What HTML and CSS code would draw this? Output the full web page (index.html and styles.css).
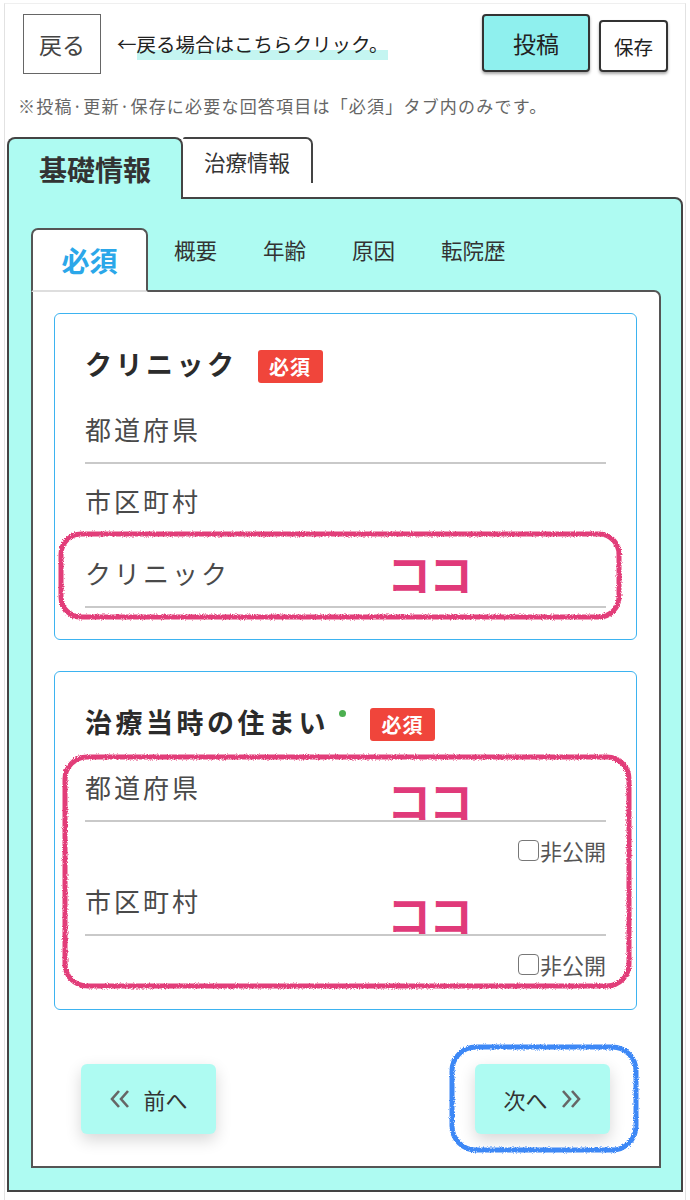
FILE: index.html
```html
<!DOCTYPE html>
<html lang="ja">
<head>
<meta charset="utf-8">
<title>基礎情報</title>
<link rel="stylesheet" href="styles.css">
</head>
<body>
<svg class="defs" width="0" height="0" aria-hidden="true">
  <filter id="rough" x="-5%" y="-5%" width="110%" height="110%">
    <feTurbulence type="fractalNoise" baseFrequency="0.9" numOctaves="2" seed="4" result="noise"/>
    <feDisplacementMap in="SourceGraphic" in2="noise" scale="3.5" xChannelSelector="R" yChannelSelector="G"/>
  </filter>
</svg>
<div class="page">
  <header class="top">
    <div class="btn-back">戻る</div>
    <p class="hint">←<span class="mark">戻る場合はこちらクリック。</span></p>
    <div class="actions">
      <div class="btn-post">投稿</div>
      <div class="btn-save">保存</div>
    </div>
  </header>
  <p class="note">※投稿·更新·保存に必要な回答項目は「必須」タブ内のみです。</p>

  <nav class="main-tabs">
    <div class="main-tab is-active">基礎情報</div>
    <div class="main-tab">治療情報</div>
  </nav>

  <section class="main-panel">
    <nav class="sub-tabs">
      <div class="sub-tab is-active">必須</div>
      <div class="sub-tab first">概要</div>
      <div class="sub-tab">年齢</div>
      <div class="sub-tab">原因</div>
      <div class="sub-tab">転院歴</div>
    </nav>

    <div class="sub-panel">
      <div class="card">
        <div class="card-title">
          <span class="title-text">クリニック</span>
          <span class="badge">必須</span>
        </div>
        <div class="field first"><span class="label">都道府県</span></div>
        <div class="field"><span class="label">市区町村</span></div>
        <div class="field"><span class="label">クリニック</span><span class="koko koko-clinic">ココ</span></div>
        <svg class="scribble scribble-clinic" viewBox="0 0 564 89" preserveAspectRatio="none" aria-hidden="true">
          <rect x="3" y="3" width="558" height="83" rx="20" ry="20" class="pink-stroke"/>
        </svg>
      </div>

      <div class="card">
        <div class="card-title">
          <span class="title-text">治療当時の住まい</span>
          <span class="dot"></span>
          <span class="badge badge-after-dot">必須</span>
        </div>
        <div class="field first"><span class="label">都道府県</span><span class="koko koko-addr">ココ</span></div>
        <div class="private"><span class="checkbox"></span>非公開</div>
        <div class="field"><span class="label">市区町村</span><span class="koko koko-addr">ココ</span></div>
        <div class="private"><span class="checkbox"></span>非公開</div>
        <svg class="scribble scribble-address" viewBox="0 0 570 235" preserveAspectRatio="none" aria-hidden="true">
          <rect x="3" y="3" width="564" height="229" rx="22" ry="22" class="pink-stroke"/>
        </svg>
      </div>

      <div class="pager">
        <div class="pager-btn">
          <svg class="chev" viewBox="0 0 24 20" aria-hidden="true"><polyline points="10,2 3,10 10,18"/><polyline points="19,2 12,10 19,18"/></svg>
          <span>前へ</span>
        </div>
        <div class="pager-btn next">
          <span>次へ</span>
          <svg class="chev" viewBox="0 0 24 20" aria-hidden="true"><polyline points="5,2 12,10 5,18"/><polyline points="14,2 21,10 14,18"/></svg>
          <svg class="scribble scribble-next" viewBox="0 0 190 109" preserveAspectRatio="none" aria-hidden="true">
            <rect x="3" y="3" width="184" height="103" rx="24" ry="24" class="blue-stroke"/>
          </svg>
        </div>
      </div>
    </div>
  </section>
</div>
</body>
</html>
```

FILE: styles.css
```css
* { box-sizing: border-box; }

html, body {
  margin: 0;
  padding: 0;
  background: #fff;
}

body {
  font-family: "Noto Sans CJK JP", "Noto Sans", sans-serif;
  color: #333;
}

.defs {
  position: absolute;
  width: 0;
  height: 0;
  overflow: hidden;
}

.page {
  margin: 3px 4px 0 4px;
  min-height: 1197px;
  border-top: 1px solid #efefef;
  border-left: 1px solid #e2e2e2;
  border-right: 1px solid #e2e2e2;
  padding-top: 10px;
}

/* header */
.top {
  display: flex;
  align-items: flex-start;
  padding: 0 17px 0 18px;
}

.btn-back {
  width: 78px;
  height: 60px;
  border: 1.5px solid #666;
  display: flex;
  align-items: center;
  justify-content: center;
  font-size: 23px;
  color: #444;
  background: #fff;
}

.hint {
  margin: 0 0 0 16px;
  align-self: center;
  font-size: 19.5px;
  line-height: 28px;
  color: #222;
  flex: 1;
}

.mark {
  background: linear-gradient(transparent 68%, #c4f5f1 68%);
  padding-bottom: 2px;
}

.actions {
  display: flex;
  align-items: flex-end;
  gap: 9px;
}

.btn-post {
  width: 108px;
  height: 58px;
  background: #8ff0ee;
  border: 2px solid #333;
  border-radius: 4px;
  box-shadow: 0 2px 3px rgba(0, 0, 0, 0.35);
  display: flex;
  align-items: center;
  justify-content: center;
  font-size: 23px;
  color: #222;
}

.btn-save {
  width: 69px;
  height: 52px;
  background: #fff;
  border: 2px solid #333;
  border-radius: 4px;
  box-shadow: 0 2px 3px rgba(0, 0, 0, 0.35);
  display: flex;
  align-items: center;
  justify-content: center;
  font-size: 19.5px;
  color: #222;
}

.note {
  margin: 20px 0 0 0;
  padding-left: 13px;
  font-size: 17px;
  letter-spacing: 1.2px;
  line-height: 24px;
  color: #666;
}

/* main tabs */
.main-tabs {
  display: flex;
  align-items: flex-start;
  margin-top: 19px;
  padding-left: 2px;
}

.main-tab {
  width: 130px;
  height: 46px;
  background: #fff;
  border-top: 2px solid #444;
  border-right: 2px solid #444;
  border-radius: 2px 7px 0 0;
  display: flex;
  align-items: center;
  justify-content: center;
  font-size: 21.5px;
  color: #333;
}

.main-tab.is-active {
  position: relative;
  z-index: 1;
  width: 176px;
  height: 62px;
  margin-bottom: -2px;
  background: #aefbf2;
  border: 2px solid #444;
  border-bottom: none;
  border-radius: 8px 8px 0 0;
  font-size: 28px;
  font-weight: 700;
  color: #333;
}

.main-panel {
  margin: 0 2px;
  background: #aefbf2;
  border: 2px solid #444;
  border-radius: 0 8px 0 0;
  padding: 29px 20px 22px 22px;
}

/* sub tabs */
.sub-tabs {
  display: flex;
  align-items: flex-start;
}

.sub-tab {
  height: 44px;
  line-height: 44px;
  padding: 0 23px;
  font-size: 21.5px;
  color: #333;
}

.sub-tab.first {
  margin-left: 3px;
}

.sub-tab.is-active {
  position: relative;
  z-index: 1;
  width: 117px;
  height: 64px;
  margin-bottom: -2px;
  padding: 0;
  background: #fff;
  border: 2px solid #555;
  border-bottom: 2px solid #dedede;
  border-radius: 7px 7px 0 0;
  display: flex;
  align-items: center;
  justify-content: center;
  font-size: 28px;
  font-weight: 700;
  color: #2ba7e9;
}

.sub-panel {
  background: #fff;
  border: 2px solid #555;
  border-radius: 0 7px 0 0;
  padding: 21px 22px 32px 21px;
  display: flex;
  flex-direction: column;
  gap: 31px;
}

/* cards */
.card {
  position: relative;
  border: 1.5px solid #3db3f0;
  border-radius: 6px;
  padding: 29px 30px 31px 30px;
}

.card-title {
  display: flex;
  align-items: center;
  height: 40px;
}

.title-text {
  font-size: 27px;
  font-weight: 700;
  letter-spacing: 3.5px;
  color: #2b2b2b;
}

.badge {
  margin-left: 20px;
  margin-top: 7px;
  width: 65px;
  height: 33px;
  background: #f0453b;
  border-radius: 3px;
  color: #fff;
  font-size: 20px;
  font-weight: 700;
  letter-spacing: 1px;
  display: flex;
  align-items: center;
  justify-content: center;
}

.badge-after-dot {
  margin-left: 24px;
}

.dot {
  width: 7px;
  height: 7px;
  border-radius: 50%;
  background: #4caf50;
  margin-left: 10px;
  align-self: flex-start;
  margin-top: 9px;
}

.field {
  position: relative;
  margin-top: 19px;
  padding-bottom: 15px;
  border-bottom: 2px solid #c9c9c9;
}

.field.first {
  margin-top: 28px;
}

.label {
  display: block;
  font-size: 26px;
  line-height: 36px;
  letter-spacing: 3px;
  color: #4a4a4a;
}

.koko {
  position: absolute;
  left: 302px;
  font-size: 44px;
  font-weight: 700;
  line-height: 40px;
  color: #e03a7a;
  letter-spacing: -2px;
}

.koko-clinic {
  top: -2px;
}

.koko-addr {
  top: 11px;
}

.private {
  margin-top: 14px;
  height: 28px;
  display: flex;
  align-items: center;
  justify-content: flex-end;
  font-size: 22px;
  color: #555;
}

.checkbox {
  width: 21px;
  height: 21px;
  border: 1.5px solid #777;
  border-radius: 4px;
  margin-right: 1px;
}

/* annotations */
.scribble {
  position: absolute;
  overflow: visible;
  pointer-events: none;
}

.pink-stroke {
  fill: none;
  stroke: #e23d79;
  stroke-width: 5;
  filter: url(#rough);
}

.blue-stroke {
  fill: none;
  stroke: #3c88f6;
  stroke-width: 5;
  filter: url(#rough);
}

.scribble-clinic {
  left: 2.5px;
  top: 216.5px;
  width: 564px;
  height: 89px;
}

.scribble-address {
  left: 6.5px;
  top: 81.5px;
  width: 570px;
  height: 235px;
}

.scribble-next {
  left: -26px;
  top: -20px;
  width: 190px;
  height: 109px;
}

/* pager */
.pager {
  display: flex;
  justify-content: space-between;
  padding: 23px 27px 0 27px;
}

.pager-btn {
  position: relative;
  width: 135px;
  height: 70px;
  background: #aefbf2;
  border-radius: 6px;
  box-shadow: 0 6px 16px rgba(0, 0, 0, 0.16);
  display: flex;
  align-items: center;
  justify-content: center;
  gap: 10px;
  font-size: 22px;
  color: #333;
}

.chev {
  width: 24px;
  height: 20px;
}

.chev polyline {
  fill: none;
  stroke: #666;
  stroke-width: 2.6;
}
```
